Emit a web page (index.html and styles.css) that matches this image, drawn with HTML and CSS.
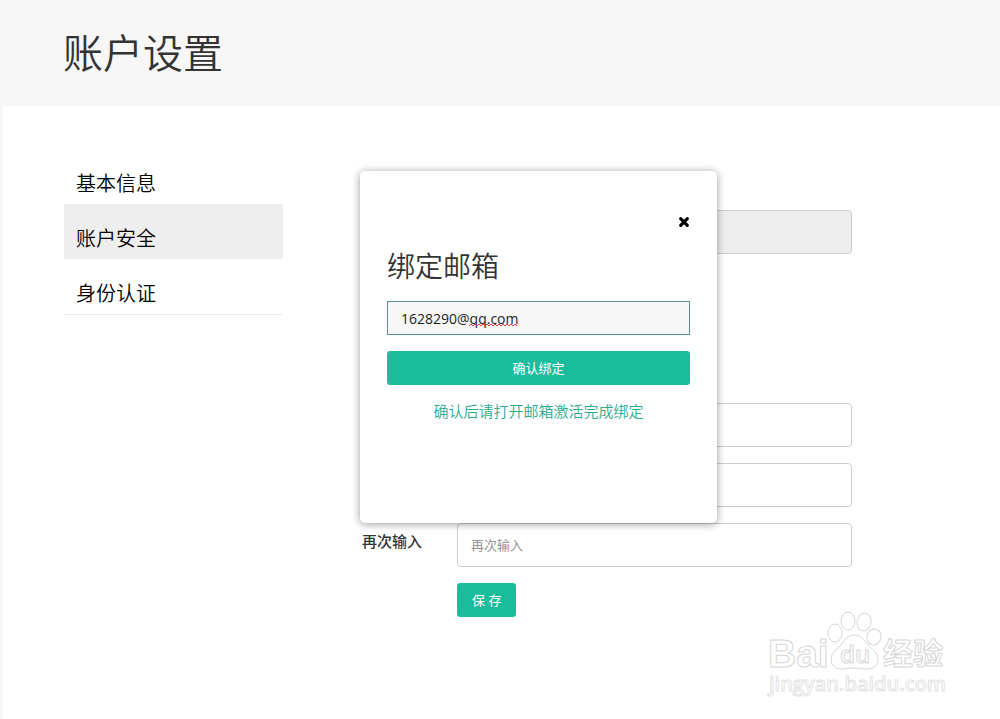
FILE: index.html
```html
<!DOCTYPE html>
<html lang="zh-CN">
<head>
  <meta charset="UTF-8" />
  <meta name="viewport" content="width=device-width, initial-scale=1.0"/>
  <title>账户设置</title>
  <link rel="stylesheet" href="styles.css">
</head>
<body>

<header class="page-header">
  <h1>账户设置</h1>
</header>

<main class="page">
  <nav class="side-nav">
    <a href="#info">基本信息</a>
    <a href="#security" class="active">账户安全</a>
    <a href="#identity">身份认证</a>
  </nav>

  <section class="content">
    <form class="settings">
      <div class="row row-email">
        <input type="text" class="field" aria-label="邮箱" disabled>
      </div>
      <div class="row">
        <input type="password" class="field" aria-label="当前密码">
      </div>
      <div class="row">
        <input type="password" class="field" aria-label="新密码">
      </div>
      <div class="row">
        <label for="confirmPwd">再次输入</label>
        <input type="password" id="confirmPwd" class="field" placeholder="再次输入">
      </div>
      <div class="row">
        <button type="button" class="btn">保 存</button>
      </div>
    </form>

    <div class="modal" role="dialog" aria-labelledby="modalTitle">
      <button type="button" class="close" aria-label="关闭">
        <svg viewBox="0 0 12 12" width="12" height="12"><path d="M2.7 2.7 9.3 9.3M9.3 2.7 2.7 9.3" stroke="#000" stroke-width="3.2" stroke-linecap="round"/></svg>
      </button>
      <h2 id="modalTitle">绑定邮箱</h2>
      <div class="email-box">
        <input type="text" id="email" aria-label="邮箱地址" value="1628290@qq.com" spellcheck="false">
        <svg class="squiggle" width="48" height="4" viewBox="0 0 48 4"><path d="M0 3l2-2 2 2 2-2 2 2 2-2 2 2 2-2 2 2 2-2 2 2 2-2 2 2 2-2 2 2 2-2 2 2 2-2 2 2 2-2 2 2 2-2 2 2 2-2 2 2" fill="none" stroke="#dc3f48"/></svg>
      </div>
      <button type="button" class="btn btn-block">确认绑定</button>
      <p class="tip">确认后请打开邮箱激活完成绑定</p>
    </div>
  </section>
</main>

<svg class="watermark" width="190" height="92" viewBox="0 0 190 92" aria-hidden="true">
  <g fill="#fff" stroke="#d6d6d6" stroke-width="1" stroke-linejoin="round">
    <ellipse cx="74" cy="24" rx="7" ry="9"/>
    <ellipse cx="87" cy="12" rx="7" ry="9"/>
    <ellipse cx="103" cy="13" rx="7" ry="9" transform="rotate(10 103 13)"/>
    <ellipse cx="113" cy="28" rx="7" ry="8" transform="rotate(15 113 28)"/>
    <path d="M93 26c7 0 10 5 14 10 4 4 10 8 10 14 0 7-5 10-11 10-5 0-8-1-13-1s-8 1-13 1c-6 0-10-4-10-10s6-10 10-14c4-5 6-10 13-10z"/>
    <text class="wm-latin" x="7" y="58" font-size="39">Bai</text>
    <text class="wm-du" x="79" y="54" font-size="24">du</text>
    <text class="wm-cjk" x="122" y="55" font-size="30">经验</text>
    <text class="wm-url" x="8" y="82" font-size="20">jingyan.baidu.com</text>
  </g>
</svg>

</body>
</html>
```
FILE: styles.css
```css
* {
  box-sizing: border-box;
}

body {
  margin: 0;
  min-height: 100vh;
  background: #fff;
  border-left: 3px solid #f7f7f7;
  font-family: "Open Sans", "Noto Sans CJK SC", sans-serif;
  font-size: 15px;
  color: #333;
}

.page-header {
  margin-left: -3px;
  padding: 21px 63px 25px;
  background: #f7f7f7;
}

h1, h2 {
  margin: 0;
  font-family: "Noto Sans CJK SC", sans-serif;
  font-weight: 350;
}

h1 {
  font-size: 40px;
  line-height: 60px;
}

.page {
  display: flex;
  gap: 79px;
  padding: 43px 148px 0 61px;
}

.side-nav {
  flex: 0 0 219px;
}

.side-nav a {
  display: block;
  padding: 20px 12px 5px;
  font-size: 20px;
  font-weight: 350;
  line-height: 30px;
  color: #000;
  text-decoration: none;
}

.side-nav a.active {
  background: #eee;
}

.side-nav a:last-child {
  border-bottom: 1px solid #eee;
}

.content {
  flex: 1;
  position: relative;
  padding-top: 61px;
}

.row {
  display: flex;
  padding-left: 95px;
  margin-bottom: 16px;
}

.row-email {
  margin-bottom: 149px;
}

.row label {
  width: 95px;
  margin-left: -95px;
  padding-top: 6px;
  font-weight: 500;
  line-height: 24px;
}

.field {
  flex: 1;
  min-width: 0;
  height: 44px;
  padding: 0 13px;
  border: 1px solid #ccc;
  border-radius: 4px;
  background: #fff;
  font-family: inherit;
  font-size: 13px;
  font-weight: 350;
}

.field:disabled {
  background: #eee;
}

.field::placeholder {
  color: #888;
}

.btn {
  height: 34px;
  padding: 0 15px 2px;
  border: none;
  border-radius: 3px;
  background: #1abc9c;
  color: #fff;
  font-family: inherit;
  font-size: 13px;
  cursor: pointer;
}

.btn-block {
  width: 100%;
}

/* bind email dialog */
.modal {
  position: absolute;
  top: 22px;
  left: -2px;
  width: 357px;
  padding: 45px 27px 100px;
  border-radius: 5px;
  background: #fff;
  box-shadow: 0 1px 8px rgba(0,0,0,0.4);
}

.close {
  display: block;
  margin-left: auto;
  padding: 0;
  border: none;
  background: none;
  line-height: 0;
  cursor: pointer;
}

h2 {
  margin: 16px 0 15px;
  font-size: 28px;
  line-height: 42px;
}

.email-box {
  position: relative;
  margin-bottom: 16px;
}

.email-box input {
  display: block;
  width: 100%;
  height: 34px;
  padding: 0 13px;
  border: 1px solid #5b8f99;
  border-radius: 0;
  background: #f7f7f7;
  color: #222;
  font-family: inherit;
  font-size: 14px;
}

.squiggle {
  position: absolute;
  left: 82px;
  top: 22px;
}

.tip {
  margin: 14px 0 0;
  color: #2bab90;
  font-weight: 350;
  line-height: 24px;
  text-align: center;
}

.watermark {
  position: absolute;
  right: 49px;
  bottom: 18px;
}

.wm-latin {
  font-family: "Liberation Sans", sans-serif;
  font-weight: 700;
}

.wm-du {
  font-family: "Open Sans", sans-serif;
  font-weight: 600;
}

.wm-cjk {
  font-family: "Noto Sans CJK SC", sans-serif;
  font-weight: 700;
}

.wm-url {
  font-family: "Open Sans", sans-serif;
  font-weight: 600;
  stroke: #e2e2e2;
}
```
